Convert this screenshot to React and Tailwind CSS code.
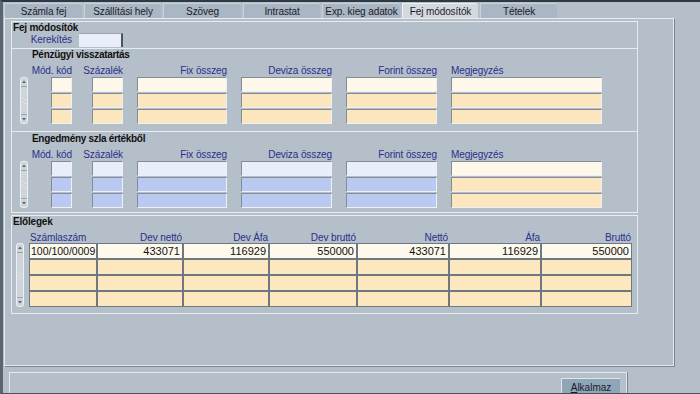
import React from "react";

const tabs = [
  { t: "Számla fej", c: "w-[78px]" },
  { t: "Szállítási hely", c: "w-[77px]" },
  { t: "Szöveg", c: "w-[78px]" },
  { t: "Intrastat", c: "w-[77px]" },
  { t: "Exp. kieg adatok", c: "w-[78px]" },
  { t: "Fej módosítók", c: "w-[76px]", active: true },
  { t: "Tételek", c: "w-[77px]" },
];

const cols = [
  { label: "Mód. kód", c: "ml-[23px] w-[21px]" },
  { label: "Százalék", c: "ml-[20px] w-[31px]" },
  { label: "Fix összeg", c: "ml-[14px] w-[90px]" },
  { label: "Deviza összeg", c: "ml-[14px] w-[91px]" },
  { label: "Forint összeg", c: "ml-[14px] w-[91px]" },
  { label: "Megjegyzés", c: "ml-[14px] w-[151px]", left: true, cream: true },
];

function ScrollBar({ h }) {
  return (
    <svg width="8" height={h} viewBox={`0 0 8 ${h}`} className="block">
      <rect x="0.5" y="0.5" width="7" height={h - 1} rx="2" fill="#cdd4db" stroke="#eef1f4" />
      <line x1="1" y1="9.5" x2="7" y2="9.5" stroke="#9aa4ae" />
      <line x1="1" y1={h - 9.5} x2="7" y2={h - 9.5} stroke="#9aa4ae" />
      <polygon points="2,6 4,3.5 6,6" fill="#5c6670" />
      <polygon points={`2,${h - 6} 4,${h - 3.5} 6,${h - 6}`} fill="#5c6670" />
      <circle cx="3" cy={h / 2 - 3} r="0.6" fill="#f4f6f8" />
      <circle cx="5" cy={h / 2 - 1} r="0.6" fill="#f4f6f8" />
      <circle cx="3" cy={h / 2 + 1} r="0.6" fill="#f4f6f8" />
      <circle cx="5" cy={h / 2 + 3} r="0.6" fill="#f4f6f8" />
    </svg>
  );
}

function Field({ color }) {
  return (
    <div
      className={`h-[15px] border border-t-[#838d97] border-l-[#838d97] border-b-[#eef1f4] border-r-[#eef1f4] ${color}`}
    />
  );
}

function SubSection({ title, blue, last }) {
  return (
    <div className={`border-t border-[#e6ecf1] ${last ? "pt-px pb-[4px]" : "pb-[7px]"}`}>
      <div className="h-[12px] pl-[20px] text-[10px] leading-[12px] font-bold tracking-[-0.3px] text-[#111]">{title}</div>
      <div className="mt-[4px] flex">
        <div className="ml-[8px] w-[8px] flex flex-col">
          <div className="h-[12px]" />
          <ScrollBar h={47} />
        </div>
        {cols.map((col, i) => {
          const useBlue = blue && !col.cream;
          const c1 = useBlue ? "bg-[#e9eefb]" : "bg-[#fdf8ea]";
          const c2 = useBlue ? "bg-[#b9c9f2]" : "bg-[#fbe6bd]";
          return (
            <div key={i} className={`flex flex-col ${col.c}`}>
              <div
                className={`h-[12px] flex whitespace-nowrap text-[10px] leading-[12px] tracking-[-0.1px] text-[#2a2f8c] ${
                  col.left ? "justify-start" : "justify-end"
                }`}
              >
                <span>{col.label}</span>
              </div>
              <div className="flex flex-col gap-px">
                <Field color={c1} />
                <Field color={c2} />
                <Field color={c2} />
              </div>
            </div>
          );
        })}
      </div>
    </div>
  );
}

const tableHeaders = ["Számlaszám", "Dev nettó", "Dev Áfa", "Dev bruttó", "Nettó", "Áfa", "Bruttó"];
const tableRows = [
  ["100/100/0009", "433071", "116929", "550000", "433071", "116929", "550000"],
  ["", "", "", "", "", "", ""],
  ["", "", "", "", "", "", ""],
  ["", "", "", "", "", "", ""],
];

export default function App() {
  return (
    <div className="w-[700px] h-[394px] overflow-hidden box-border bg-[#b5bfc9] border-t-2 border-t-[#2f3942] border-l-[3px] border-l-[#5b656f] border-b border-b-[#4a535c] flex flex-col font-['Liberation_Sans',Arial,sans-serif] text-[#1b1b2b]">
      {/* Tabs */}
      <div className="mt-px ml-px flex gap-[2px] h-[15px] shrink-0">
        {tabs.map((tb, i) => (
          <div
            key={i}
            className={`${tb.c} h-[15px] rounded-tr-[3px] border-l border-t flex items-center justify-center text-[10px] leading-[13px] tracking-[-0.1px] whitespace-nowrap ${
              tb.active
                ? "bg-[#d4d9de] border-[#eef2f5]"
                : "bg-[#a9b6c3] border-[#c9d2da]"
            }`}
          >
            {tb.t}
          </div>
        ))}
      </div>

      {/* Outer panel */}
      <div className="ml-px w-[670px] h-[348px] shrink-0 box-border border border-[#e4eaf0] shadow-[1px_1px_0_0_#7a848e] flex flex-col">
        {/* Fej módosítók group */}
        <div className="mt-[2px] ml-[6px] w-[627px] box-border border border-[#e6ecf1]">
          <div className="h-[11px] pl-px text-[10px] leading-[11px] font-bold tracking-[-0.2px] text-[#111]">Fej módosítók</div>
          <div className="h-[14px] flex items-center">
            <div className="w-[60px] text-right text-[10px] leading-[14px] tracking-[-0.1px] text-[#2a2f8c]">Kerekítés</div>
            <div className="ml-[7px] w-[44px] h-[14px] bg-[#eaeefb] border-r-2 border-r-[#4b5560] border-t border-t-[#9aa4ae]" />
          </div>
          <div className="h-px" />
          <SubSection title="Pénzügyi visszatartás" />
          <SubSection title="Engedmény szla értékből" blue last />
        </div>

        {/* Előlegek group */}
        <div className="mt-[2px] ml-[6px] w-[627px] box-border border border-[#e6ecf1] pb-[6px]">
          <div className="h-[12px] pl-px text-[10px] leading-[12px] font-bold tracking-[-0.2px] text-[#111]">Előlegek</div>
          <div className="mt-[4px] flex">
            <div className="ml-[4px] w-[8px] flex flex-col">
              <div className="h-[11px]" />
              <ScrollBar h={64} />
            </div>
            <div className="ml-[5px] flex flex-col">
              <div className="h-[11px] px-px grid grid-cols-[66px_84px_84px_86px_90px_90px_89px] gap-x-[2px] text-[10px] leading-[11px] tracking-[-0.1px] text-[#2a2f8c] whitespace-nowrap">
                {tableHeaders.map((h, i) => (
                  <div key={i} className={i === 0 ? "text-left" : "text-right"}>
                    {h}
                  </div>
                ))}
              </div>
              <div className="p-px bg-[#6f7882] grid grid-cols-[66px_84px_84px_86px_90px_90px_89px] gap-[2px]">
                {tableRows.map((row, r) =>
                  row.map((cell, c) => (
                    <div
                      key={`${r}-${c}`}
                      className={`h-[14px] leading-[14px] text-[#111] whitespace-nowrap overflow-hidden ${
                        r === 0 ? "bg-[#fdf9ec]" : "bg-[#fce7bf]"
                      } ${c === 0 ? "text-left text-[10.5px] px-px" : "text-right text-[11px] px-[2px]"}`}
                    >
                      {cell}
                    </div>
                  ))
                )}
              </div>
            </div>
          </div>
        </div>
      </div>

      {/* Bottom panel */}
      <div className="mt-[6px] ml-[6px] w-[618px] flex-1 box-border border-t border-l border-r border-[#e4eaf0] shadow-[1px_0_0_0_#7a848e] flex justify-end pr-[6px] pt-[5px]">
        <div className="w-[59px] h-[17px] box-border bg-[#8fa5b8] border-t border-l border-[#dde4ea] flex items-center justify-center text-[10px] leading-[13px] text-[#1b1b2b]">
          <span>
            <span className="underline">A</span>lkalmaz
          </span>
        </div>
      </div>
    </div>
  );
}
